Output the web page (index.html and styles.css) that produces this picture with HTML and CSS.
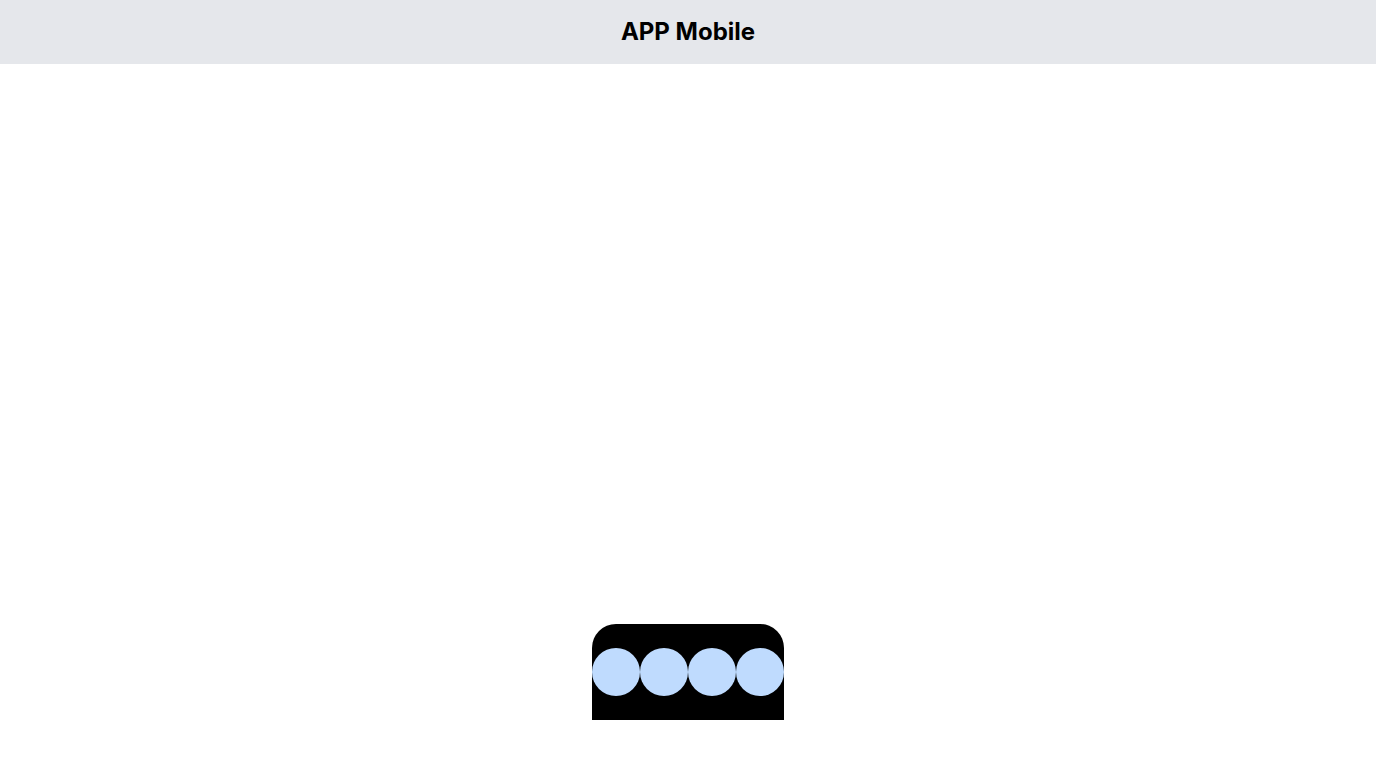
FILE: index.html
```html
<!DOCTYPE html>
<html>
<head>
    <link rel="stylesheet" href="styles.css">
    <title>APP Mobile</title>
</head>
<body>
    <header class="topbar">
        <h1 class="title">APP Mobile</h1>
    </header>
    <main class="screen">
        <div class="dock">
            <span class="dot"></span>
            <span class="dot"></span>
            <span class="dot"></span>
            <span class="dot"></span>
        </div>
    </main>
</body>
</html>
```

FILE: styles.css
```css
*{
    margin: 0px;
    padding: 0px;
    box-sizing: border-box;
}
body{
    display: flex;
    flex-direction: column;
    height: 100vh;
    background-color: #ffffff;
    font-family: Inter, "Liberation Sans", sans-serif;
}
.topbar{
    display: flex;
    align-items: center;
    justify-content: center;
    height: 64px;
    background-color: #e5e7eb;
}
.title{
    font-size: 24px;
    line-height: 32px;
    font-weight: 700;
    color: #000000;
}
.screen{
    flex: 1;
    display: flex;
    align-items: flex-end;
    justify-content: center;
    padding-bottom: 48px;
}
.dock{
    display: flex;
    align-items: center;
    width: 192px;
    height: 96px;
    background-color: #000000;
    border-radius: 24px 24px 0px 0px;
}
.dot{
    width: 48px;
    height: 48px;
    border-radius: 50%;
    background-color: #bfdbfe;
}
```
